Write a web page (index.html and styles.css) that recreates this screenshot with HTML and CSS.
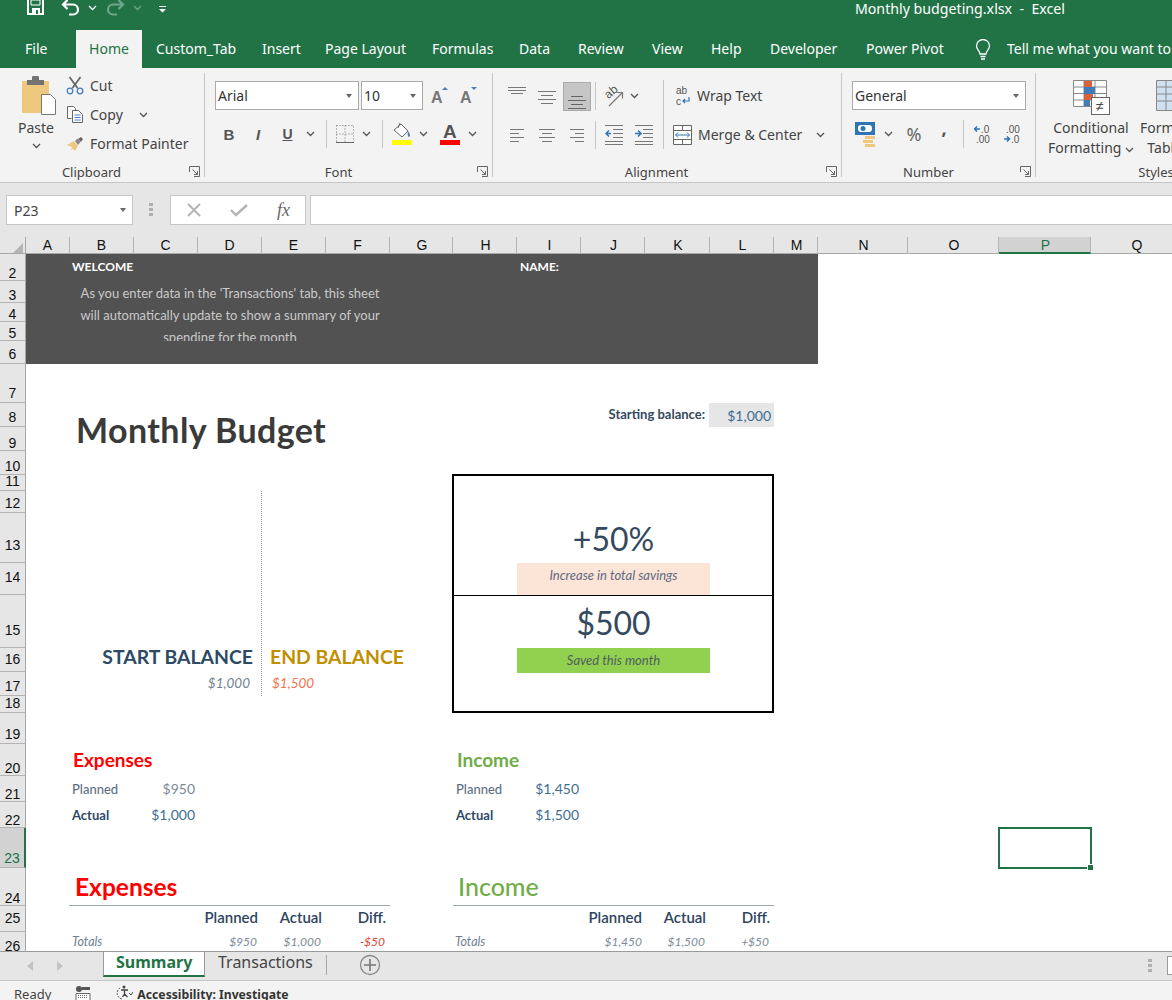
FILE: index.html
```html
<!DOCTYPE html>
<html>

<head>
    <meta charset="UTF-8">
    <meta name="viewport" content="width=device-width, initial-scale=1.0">
    <title>Monthly budgeting.xlsx - Excel</title>
    <link rel="stylesheet" href="styles.css">
</head>

<body>
    <svg class="defs" width="0" height="0">
        <symbol id="chev" viewBox="0 0 9 6"><path d="M1 1l3.5 3.5L8 1" fill="none" stroke="#555" stroke-width="1.3"/></symbol>
        <symbol id="launch" viewBox="0 0 11 11"><path d="M.5 6V.5h10v10H5M3.5 3.5l5 5M8.5 5v3.5H5" fill="none" stroke="#666"/></symbol>
    </svg>

    <div class="titlebar">
        <svg class="qat-save" width="17" height="15" viewBox="0 0 17 15"><path d="M1 0v14h15V0" fill="none" stroke="#fff" stroke-width="2"/><path d="M5 8h8v6H5z" fill="#fff"/><path d="M9 10h2v4H9z" fill="#217346"/><path d="M4 0h9v5H4z" fill="none" stroke="#fff"/></svg>
        <svg class="qat-undo" width="19" height="16" viewBox="0 0 19 16"><path d="M6.5 0L2 4.5 6.5 9M2.5 4.5H12a5 5 0 0 1 0 10H8" fill="none" stroke="#fff" stroke-width="2.2"/></svg>
        <svg class="qat-chev" width="9" height="6"><path d="M1 1l3.5 3.5L8 1" fill="none" stroke="#fff" stroke-width="1.3"/></svg>
        <svg class="qat-redo" width="19" height="16" viewBox="0 0 19 16"><path d="M12.5 0L17 4.5 12.5 9M16.5 4.5H7a5 5 0 0 0 0 10h4" fill="none" stroke="#6fa68a" stroke-width="2.2"/></svg>
        <svg class="qat-chev2" width="9" height="6"><path d="M1 1l3.5 3.5L8 1" fill="none" stroke="#6fa68a" stroke-width="1.3"/></svg>
        <svg class="qat-more" width="7" height="7"><path d="M0 .5h7" stroke="#fff"/><path d="M0 3h7L3.5 6.5z" fill="#fff"/></svg>
        <div class="doc-title">Monthly budgeting.xlsx&nbsp; -&nbsp; Excel</div>
    </div>

    <div class="tabbar">
        <div class="tab file">File</div>
        <div class="tab active">Home</div>
        <div class="tab">Custom_Tab</div>
        <div class="tab">Insert</div>
        <div class="tab">Page Layout</div>
        <div class="tab">Formulas</div>
        <div class="tab">Data</div>
        <div class="tab">Review</div>
        <div class="tab">View</div>
        <div class="tab">Help</div>
        <div class="tab">Developer</div>
        <div class="tab">Power Pivot</div>
        <svg class="bulb" width="16" height="22" viewBox="0 0 16 22"><path d="M5 15c0-3-3.5-4.5-3.5-8a6.5 6.5 0 0 1 13 0c0 3.5-3.5 5-3.5 8z" fill="none" stroke="#fff" stroke-width="1.3"/><path d="M5.5 17.5h5M6 20h4" stroke="#fff" stroke-width="1.5"/></svg>
        <div class="tell">Tell me what you want to do</div>
    </div>

    <div class="ribbon">
        <section class="group clipboard">
            <div class="group-body clip-body">
                <div class="paste">
                    <svg width="36" height="40" viewBox="0 0 36 40"><rect x="1" y="5" width="27" height="32" rx="1" fill="#edc87e"/><path d="M6 4h5V2a2 2 0 0 1 7 0v2h5v5H6z" fill="#737373"/><path d="M20.5 18.5h9l5 5v15h-14z" fill="#fff" stroke="#777"/></svg>
                    <div class="paste-label">Paste</div>
                    <svg class="chev" width="9" height="6"><use href="#chev"/></svg>
                </div>
                <div class="clip-list">
                    <div class="clip-item">
                        <svg width="18" height="19" viewBox="0 0 18 19"><path d="M3.5 1l8 11M14.5 1l-8 11" stroke="#666" stroke-width="1.8"/><circle cx="4" cy="15" r="2.8" fill="none" stroke="#4a7ebb" stroke-width="1.3"/><circle cx="14" cy="15" r="2.8" fill="none" stroke="#4a7ebb" stroke-width="1.3"/></svg>
                        <span>Cut</span>
                    </div>
                    <div class="clip-item">
                        <svg width="18" height="19" viewBox="0 0 18 19"><path d="M1.5 1.5h6l2 2v2M1.5 1.5v12h4" fill="#fff" stroke="#666"/><path d="M6.5 5.5h6l4 4v8h-10z" fill="#fff" stroke="#666"/><path d="M8.5 10h6M8.5 12.5h6M8.5 15h6" stroke="#4a7ebb"/></svg>
                        <span>Copy</span>
                        <svg class="chev copy-chev" width="9" height="6"><use href="#chev"/></svg>
                    </div>
                    <div class="clip-item">
                        <svg width="18" height="16" viewBox="0 0 18 16"><path d="M1 9l7-4 4 5-3 5-2-2-2 1 1-3z" fill="#edc87e"/><path d="M9 5l2.5-2.5 3 3.5L12 9z" fill="#888"/><path d="M12 3l3-2 2 2-2 3z" fill="#666"/></svg>
                        <span>Format Painter</span>
                    </div>
                </div>
            </div>
            <div class="group-label">Clipboard<svg class="launcher" width="11" height="11"><use href="#launch"/></svg></div>
        </section>

        <section class="group font">
            <div class="group-body">
                <div class="font-top">
                    <div class="combo w-font">Arial<i class="caret"></i></div>
                    <div class="combo w-size">10<i class="caret"></i></div>
                    <svg class="grow" width="20" height="18" viewBox="0 0 20 18"><text x="1" y="16" class="glyph-a">A</text><path d="M12 3l3-3 3 3z" fill="#4a7ebb"/></svg>
                    <svg class="shrink" width="20" height="18" viewBox="0 0 20 18"><text x="1" y="16" class="glyph-a">A</text><path d="M12 0h6l-3 3z" fill="#4a7ebb"/></svg>
                </div>
                <div class="font-tools">
                    <span class="t-b">B</span>
                    <span class="t-i">I</span>
                    <span class="t-u">U</span>
                    <svg width="9" height="6"><use href="#chev"/></svg>
                    <i class="sep"></i>
                    <svg width="18" height="18" viewBox="0 0 18 18"><path d="M.5.5h17v17M.5.5v17M9 .5v17M.5 9h17" fill="none" stroke="#777" stroke-dasharray="1 2"/><path d="M0 17.5h18" stroke="#666"/></svg>
                    <svg width="9" height="6"><use href="#chev"/></svg>
                    <i class="sep"></i>
                    <svg width="20" height="24" viewBox="0 0 20 24"><path d="M2 8l7-6 7 7-6 6z" fill="#fff" stroke="#666"/><path d="M6 6l2-5" stroke="#666"/><path d="M16 9c2 3 2.5 4 1.5 5.5S15 14 16 9z" fill="#4a7ebb"/><rect y="18" width="20" height="5" fill="#ff0"/></svg>
                    <svg width="9" height="6"><use href="#chev"/></svg>
                    <svg width="20" height="24" viewBox="0 0 20 24"><text x="3" y="16" class="glyph-a big">A</text><rect y="18" width="20" height="5" fill="#f00"/></svg>
                    <svg width="9" height="6"><use href="#chev"/></svg>
                </div>
            </div>
            <div class="group-label">Font<svg class="launcher" width="11" height="11"><use href="#launch"/></svg></div>
        </section>

        <section class="group alignment">
            <div class="group-body align-body">
                <div class="align-icons">
                    <div class="align-row top">
                        <svg width="18" height="8" viewBox="0 0 18 8"><path d="M0 .5h18M0 3.5h18M3 6.5h12" stroke="#777"/></svg>
                        <svg width="18" height="13" viewBox="0 0 18 13"><path d="M0 .5h18M3 4.5h12M0 8.5h18M3 12.5h12" stroke="#777"/></svg>
                        <div class="align-on"><svg width="18" height="13" viewBox="0 0 18 13"><path d="M3 .5h12M0 4.5h18M3 8.5h12M0 12.5h18" stroke="#666"/></svg></div>
                        <i class="sep"></i>
                        <svg width="20" height="22" viewBox="0 0 20 22"><text x="1" y="11" class="ab" transform="rotate(-40 7 8)">ab</text><path d="M5 21L18 8M12.5 7.5h6v6" fill="none" stroke="#777" stroke-width="1.2"/></svg>
                        <svg width="9" height="6"><use href="#chev"/></svg>
                    </div>
                    <div class="align-row lower">
                        <svg width="14" height="13" viewBox="0 0 14 13"><path d="M0 .5h14M0 4.5h9M0 8.5h14M0 12.5h9" stroke="#777"/></svg>
                        <svg width="16" height="13" viewBox="0 0 16 13"><path d="M0 .5h16M3 4.5h10M0 8.5h16M3 12.5h10" stroke="#777"/></svg>
                        <svg width="14" height="13" viewBox="0 0 14 13"><path d="M0 .5h14M5 4.5h9M0 8.5h14M5 12.5h9" stroke="#777"/></svg>
                        <i class="sep"></i>
                        <svg width="18" height="20" viewBox="0 0 18 20"><path d="M0 .5h18M8 4.5h10M8 8.5h10M8 12.5h10M0 16.5h18M0 19.5h18" stroke="#777"/><path d="M6 8.5H1M4 5.5l-3 3 3 3" fill="none" stroke="#2f75b5" stroke-width="1.5"/></svg>
                        <svg width="18" height="20" viewBox="0 0 18 20"><path d="M0 .5h18M8 4.5h10M8 8.5h10M8 12.5h10M0 16.5h18M0 19.5h18" stroke="#777"/><path d="M0 8.5h5M3 5.5l3 3-3 3" fill="none" stroke="#2f75b5" stroke-width="1.5"/></svg>
                    </div>
                </div>
                <div class="align-text">
                    <div class="align-cmd cmd-wrap">
                        <svg width="16" height="20" viewBox="0 0 16 20"><text x="1" y="8" class="ab-small">ab</text><text x="1" y="19" class="ab-small">c</text><path d="M14 11v4H8M10 13l-2 2 2 2" fill="none" stroke="#2f75b5" stroke-width="1.2"/></svg>
                        <span>Wrap Text</span>
                    </div>
                    <div class="align-cmd">
                        <svg width="19" height="20" viewBox="0 0 19 20"><path d="M.5.5h18v19H.5zM.5 5.5h18M.5 14.5h18M9.5.5v5M9.5 14.5v5" fill="#fff" stroke="#666"/><path d="M3 10h13M5 7.5L2.5 10 5 12.5M14 7.5l2.5 2.5-2.5 2.5" fill="none" stroke="#2f75b5"/></svg>
                        <span>Merge &amp; Center</span>
                        <svg class="merge-chev" width="9" height="6"><use href="#chev"/></svg>
                    </div>
                </div>
            </div>
            <div class="group-label">Alignment<svg class="launcher" width="11" height="11"><use href="#launch"/></svg></div>
        </section>

        <section class="group number">
            <div class="group-body">
                <div class="combo w-format">General<i class="caret"></i></div>
                <div class="number-tools">
                    <svg width="23" height="25" viewBox="0 0 23 25"><rect y="0" width="20" height="13" fill="#2f75b5"/><rect x="3" y="3" width="14" height="7" rx="3" fill="#fff"/><circle cx="8" cy="6.5" r="2.5" fill="#2f75b5"/><path d="M10 14h10v3H10zM8 18h10v3H8zM10 22h10v3H10z" fill="#edc87e"/></svg>
                    <svg width="9" height="6"><use href="#chev"/></svg>
                    <span class="t-pct">%</span>
                    <span class="t-comma">,</span>
                    <i class="sep"></i>
                    <svg width="16" height="20" viewBox="0 0 16 20"><path d="M6 5H1M3 2.5L.5 5 3 7.5" fill="none" stroke="#2f75b5" stroke-width="1.5"/><text x="7" y="9" class="dec">.0</text><text x="2" y="19" class="dec">.00</text></svg>
                    <svg width="16" height="20" viewBox="0 0 16 20"><text x="2" y="9" class="dec">.00</text><path d="M0 15h5M3 12.5L5.5 15 3 17.5" fill="none" stroke="#2f75b5" stroke-width="1.5"/><text x="7" y="19" class="dec">.0</text></svg>
                </div>
            </div>
            <div class="group-label">Number<svg class="launcher" width="11" height="11"><use href="#launch"/></svg></div>
        </section>

        <section class="group styles">
            <div class="group-body styles-body">
                <div class="style-cmd cf">
                    <svg width="38" height="35" viewBox="0 0 38 35"><path d="M1.5.5h33v26h-33zM1.5 7h33M1.5 13.5h33M1.5 20h33M12 .5v26M23 .5v26" fill="#fff" stroke="#888"/><rect x="12" y="1" width="8" height="6" fill="#d9623b"/><rect x="12" y="7" width="11" height="7" fill="#3f7cba"/><rect x="12" y="14" width="9" height="6" fill="#d9623b"/><rect x="12" y="20" width="6" height="6" fill="#3f7cba"/><rect x="19.5" y="17.5" width="18" height="17" fill="#fff" stroke="#666"/><text x="24" y="31" class="ne">≠</text></svg>
                    <div>Conditional</div>
                    <div>Formatting <svg width="9" height="6"><use href="#chev"/></svg></div>
                </div>
                <div class="style-cmd ft">
                    <svg width="36" height="35" viewBox="0 0 36 35"><path d="M16.5.5h19v30h-19zM16.5 7h19M16.5 14h19M16.5 21h19M26 .5v30" fill="#cfe0f0" stroke="#888"/></svg>
                    <div>Format as</div>
                    <div>Table <svg width="9" height="6"><use href="#chev"/></svg></div>
                </div>
            </div>
            <div class="group-label">Styles</div>
        </section>
    </div>

    <div class="formula-band">
        <div class="name-box">P23<i class="caret"></i></div>
        <div class="grip"><i></i><i></i><i></i></div>
        <div class="fx-box">
            <svg width="16" height="14" viewBox="0 0 16 14"><path d="M2 1l12 12M14 1L2 13" stroke="#b5b5b5" stroke-width="2"/></svg>
            <svg width="18" height="14" viewBox="0 0 18 14"><path d="M1 7l5 5L17 2" fill="none" stroke="#b5b5b5" stroke-width="2.4"/></svg>
            <span class="fx">fx</span>
        </div>
        <div class="formula-input"></div>
    </div>

    <div class="col-headers">
        <div class="corner"><i></i></div>
        <div>A</div><div>B</div><div>C</div><div>D</div><div>E</div><div>F</div><div>G</div>
        <div>H</div><div>I</div><div>J</div><div>K</div><div>L</div><div>M</div><div>N</div>
        <div>O</div><div class="col-on">P</div><div>Q</div>
    </div>

    <div class="sheet">
        <div class="rh">2</div>
        <div class="rh">3</div>
        <div class="rh">4</div>
        <div class="rh">5</div>
        <div class="rh pb2">6</div>
        <div class="rh pb2">7</div>
        <div class="rh pb2">8</div>
        <div class="rh">9</div>
        <div class="rh pb1">10</div>
        <div class="rh pb2">11</div>
        <div class="rh pb2">12</div>
        <div class="rh pb10">13</div>
        <div class="rh pb10">14</div>
        <div class="rh pb10">15</div>
        <div class="rh pb5">16</div>
        <div class="rh pb2">17</div>
        <div class="rh pb2">18</div>
        <div class="rh pb2">19</div>
        <div class="rh">20</div>
        <div class="rh">21</div>
        <div class="rh">22</div>
        <div class="rh pb2 row-on">23</div>
        <div class="rh">24</div>
        <div class="rh pb6">25</div>
        <div class="rh pb4">26</div>

        <div class="banner"></div>
        <div class="cell welcome">WELCOME</div>
        <div class="cell name">NAME:</div>
        <div class="intro">As you enter data in the 'Transactions' tab, this sheet<br>will automatically update to show a summary of your<br>spending for the month</div>

        <div class="cell heading">Monthly Budget</div>
        <div class="cell start-label">Starting balance:</div>
        <div class="cell start-value">$1,000</div>

        <div class="divider"></div>
        <div class="cell start-title">START BALANCE</div>
        <div class="cell end-title">END BALANCE</div>
        <div class="cell start-amount">$1,000</div>
        <div class="cell end-amount">$1,500</div>

        <div class="band peach"></div>
        <div class="band green"></div>
        <div class="cell kpi kpi-pct">+50%</div>
        <div class="cell kpi-label peach-label">Increase in total savings</div>
        <div class="cell kpi kpi-save">$500</div>
        <div class="cell kpi-label green-label">Saved this month</div>
        <div class="kpi-frame"></div>

        <div class="cell sub exp-sub">Expenses</div>
        <div class="cell line planned exp-pl">Planned</div>
        <div class="cell amt planned-amt exp-pl-v">$950</div>
        <div class="cell line actual exp-ac">Actual</div>
        <div class="cell amt actual-amt exp-ac-v">$1,000</div>

        <div class="cell sub inc-sub">Income</div>
        <div class="cell line planned inc-pl">Planned</div>
        <div class="cell amt actual-amt inc-pl-v">$1,450</div>
        <div class="cell line actual inc-ac">Actual</div>
        <div class="cell amt actual-amt inc-ac-v">$1,500</div>

        <div class="cell table-title exp-title">Expenses</div>
        <div class="cell table-title inc-title">Income</div>

        <div class="cell th exp-c1">Planned</div>
        <div class="cell th exp-c2">Actual</div>
        <div class="cell th exp-c3">Diff.</div>
        <div class="cell totals exp-t">Totals</div>
        <div class="cell tot exp-v1">$950</div>
        <div class="cell tot exp-v2">$1,000</div>
        <div class="cell tot minus exp-v3">-$50</div>

        <div class="cell th inc-c1">Planned</div>
        <div class="cell th inc-c2">Actual</div>
        <div class="cell th inc-c3">Diff.</div>
        <div class="cell totals inc-t">Totals</div>
        <div class="cell tot inc-v1">$1,450</div>
        <div class="cell tot inc-v2">$1,500</div>
        <div class="cell tot inc-v3">+$50</div>

        <div class="selected"><i></i></div>
    </div>

    <div class="sheet-tabs">
        <svg class="nav-arrows" width="36" height="12" viewBox="0 0 36 12"><path d="M6 1v10L0 6zM30 1v10l6-5z" fill="#c3c3c3"/></svg>
        <div class="sheet-tab on">Summary</div>
        <div class="sheet-tab">Transactions</div>
        <i class="tab-sep"></i>
        <svg class="add-sheet" width="22" height="22" viewBox="0 0 22 22"><circle cx="11" cy="11" r="9.5" fill="none" stroke="#8a8a8a" stroke-width="1.3"/><path d="M11 5v12M5 11h12" stroke="#777" stroke-width="1.6"/></svg>
        <div class="grip tab-grip"><i></i><i></i><i></i></div>
        <div class="scroll-stub"></div>
    </div>

    <div class="statusbar">
        <span class="ready">Ready</span>
        <svg class="macro" width="16" height="16" viewBox="0 0 16 16"><circle cx="4" cy="4" r="3" fill="#555"/><path d="M7 2h8v3H7z" fill="#555"/><path d="M1 8.5h14V16H1z" fill="#fff" stroke="#666"/><path d="M3 10.5h10M3 12.5h10" stroke="#666" stroke-dasharray="1 1"/></svg>
        <svg class="access" width="18" height="16" viewBox="0 0 18 16"><path d="M5 3a6 6 0 0 0 2 11" fill="none" stroke="#555" stroke-dasharray="2 1"/><circle cx="9" cy="2" r="1.5" fill="#444"/><path d="M6 5h7M9.5 5v4l-2 3M9.5 9l3 3" fill="none" stroke="#444" stroke-width="1.3"/><path d="M14 8l2 2 2-3" fill="none" stroke="#444"/></svg>
        <b class="access-text">Accessibility: Investigate</b>
    </div>
</body>

</html>
```

FILE: styles.css
```css
:root {
    --cols: 26px 44px 64px 64px 64px 64px 64px 63px 64px 64px 64px 65px 64px 44px 90px 91px 92px 91px;
    --green: #217346;
    --ui: "Noto Sans", "Open Sans", sans-serif;
    --sheet: Lato, "Open Sans", sans-serif;
}

* {
    box-sizing: border-box;
}

html,
body {
    margin: 0;
    height: 1000px;
    overflow: hidden;
}

body {
    font-family: var(--ui);
    font-size: 14px;
    color: #444;
    background-color: #f3f3f3;
}

.defs {
    position: absolute;
}

i {
    font-style: normal;
}

/* title bar */
.titlebar {
    height: 30px;
    background-color: var(--green);
    display: flex;
    align-items: flex-start;
    padding-left: 27px;
    color: #fff;
}

.qat-undo {
    margin-left: 17px;
}

.qat-chev {
    margin: 5px 0 0 8px;
}

.qat-redo {
    margin-left: 9px;
}

.qat-chev2 {
    margin: 5px 0 0 8px;
}

.qat-more {
    margin: 6px 0 0 17px;
}

.doc-title {
    margin-left: auto;
    padding-right: 107px;
    line-height: 18px;
    font-size: 14.2px;
}

/* tabs */
.tabbar {
    height: 38px;
    background-color: var(--green);
    display: grid;
    grid-template-columns: 76px 66px 106px 63px 107px 87px 59px 74px 59px 59px 96px 109px 46px 1fr;
    color: #fff;
    white-space: nowrap;
    overflow: hidden;
}

.tab {
    padding-left: 14px;
    line-height: 37px;
    font-size: 14px;
}

.tab.file {
    padding-left: 25px;
}

.tab.active {
    padding: 0;
    text-align: center;
    background-color: #f3f3f3;
    color: var(--green);
}

.bulb {
    margin: 9px 0 0 14px;
}

.tell {
    line-height: 37px;
}

/* ribbon */
.ribbon {
    height: 114px;
    padding: 5px 0;
    display: flex;
    overflow: hidden;
    background-color: #f3f3f3;
    white-space: nowrap;
}

.group {
    flex: none;
    height: 104px;
    display: flex;
    flex-direction: column;
    border-right: 1px solid #c6c6c6;
}

.group-body {
    flex: 1;
    min-height: 0;
}

.group-label {
    position: relative;
    height: 16px;
    line-height: 22px;
    text-align: center;
    font-size: 13px;
}

.launcher {
    position: absolute;
    right: 4px;
    top: 5px;
}

.clipboard {
    width: 205px;
}

.clipboard .group-label {
    padding-right: 21px;
}

.clip-body {
    display: flex;
}

.paste {
    width: 72px;
    padding-top: 3px;
    text-align: center;
}

.paste svg {
    display: block;
    margin: 0 auto;
}

.paste>svg:first-child {
    margin-left: 21px;
}

.paste-label {
    line-height: 20px;
    margin-top: 2px;
}

.paste .chev {
    margin-top: 5px;
}

.clip-list {
    margin-top: -2px;
    margin-left: -6px;
}

.clip-item {
    height: 29px;
    display: flex;
    align-items: center;
    gap: 6px;
}

.clip-item svg:first-child {
    width: 18px;
}

.copy-chev {
    margin-left: 10px;
}

.font {
    width: 288px;
    padding-left: 10px;
}

.font .group-label {
    padding-right: 30px;
}

.font-top {
    margin-top: 8px;
    display: flex;
    align-items: center;
}

.combo {
    position: relative;
    height: 29px;
    padding-left: 2px;
    line-height: 28px;
    background-color: #fff;
    border: 1px solid #ababab;
    color: #333;
}

.caret {
    position: absolute;
    right: 6px;
    top: 12px;
    border: 3.5px solid transparent;
    border-top: 4px solid #666;
    border-bottom: 0;
}

.w-font {
    width: 144px;
    margin-right: 2px;
}

.w-size {
    width: 62px;
}

.grow {
    margin-left: 7px;
}

.shrink {
    margin-left: 9px;
}

.glyph-a {
    font: 700 16px "Liberation Sans", sans-serif;
    fill: #777;
}

.glyph-a.big {
    font-size: 19px;
    fill: #555;
}

.font-tools {
    margin-top: 10px;
    height: 28px;
    display: grid;
    grid-template-columns: 28px 30px 29px 17px 14px 24px 18px 14px 25px 19px 34px 10px;
    align-items: center;
    justify-items: center;
}

.t-b {
    font: 700 15px "Liberation Sans", sans-serif;
    color: #555;
}

.t-i {
    font: italic 700 15px "Liberation Sans", sans-serif;
    color: #555;
}

.t-u {
    font: 700 14px "Liberation Sans", sans-serif;
    color: #555;
    text-decoration: underline;
}

.sep {
    display: block;
    width: 1px;
    height: 28px;
    background-color: #c6c6c6;
}

.alignment {
    width: 349px;
}

.alignment .group-label {
    padding-right: 21px;
}

.align-body {
    display: flex;
    padding-top: 7px;
}

.align-icons {
    width: 171px;
    height: 69px;
    border-right: 1px solid #c6c6c6;
}

.align-row {
    display: grid;
    grid-template-columns: 9px 30px 30px 30px 6px 32px 8px;
    height: 30px;
    align-items: center;
    justify-items: center;
}

.align-row.lower {
    grid-template-columns: 9px 30px 30px 30px 6px 32px 28px;
}

.align-row>:first-child {
    grid-column: 2;
}

.align-row.top {
    margin-top: 1px;
    margin-bottom: 9px;
}

.align-row.top>:first-child {
    align-self: start;
    margin-top: 6px;
}

.align-row.top>:nth-child(2) {
    margin-top: 2px;
}

.align-on {
    width: 28px;
    height: 29px;
    padding-top: 11px;
    text-align: center;
    background-color: #c6c6c6;
    border: 1px solid #ababab;
}

.align-text {
    padding-left: 9px;
}

.align-cmd {
    position: relative;
    display: flex;
    align-items: center;
    gap: 6px;
    height: 29px;
}

.cmd-wrap {
    margin: 1px 0 10px 2px;
}

.merge-chev {
    margin-left: 8px;
}

.ab {
    font: 12px "Liberation Sans", sans-serif;
    fill: #555;
}

.ab-small {
    font: 10px "Liberation Sans", sans-serif;
    fill: #555;
}

.number {
    width: 194px;
    padding-left: 10px;
}

.number .group-label {
    padding-right: 30px;
}

.w-format {
    width: 174px;
    margin-top: 8px;
}

.number-tools {
    margin-top: 10px;
    height: 28px;
    display: grid;
    grid-template-columns: 28px 16px 36px 24px 14px 24px 36px;
    align-items: center;
    justify-items: center;
}

.t-pct {
    font-size: 18px;
    color: #666;
}

.t-comma {
    font-size: 18px;
    font-weight: 700;
    color: #555;
    margin-top: -12px;
}

.dec {
    font: 10px "Liberation Sans", sans-serif;
    fill: #555;
}

.styles {
    width: 240px;
    border-right: 0;
}

.styles-body {
    display: flex;
    padding: 7px 0 0 10px;
}

.style-cmd {
    text-align: center;
    line-height: 20px;
}

.style-cmd>svg {
    display: block;
    margin: 0 auto 3px;
}

.cf {
    width: 90px;
}

.ft {
    width: 62px;
    margin-left: 4px;
}

.ft>svg {
    margin: 0 0 3px 0;
}

.ne {
    font: 14px "Liberation Sans", sans-serif;
    fill: #444;
}

/* formula bar */
.formula-band {
    height: 55px;
    display: flex;
    padding: 12px 0 12px 6px;
    background-color: #e6e6e6;
    border-top: 1px solid #c6c6c6;
}

.name-box {
    position: relative;
    width: 127px;
    height: 30px;
    padding-left: 7px;
    line-height: 29px;
    background-color: #fff;
    border: 1px solid #c6c6c6;
    font-size: 14px;
}

.grip {
    width: 6px;
    margin: 8px 15px 0 16px;
}

.grip i {
    display: block;
    width: 4px;
    height: 3px;
    margin-bottom: 2px;
    background-color: #b0b0b0;
}

.fx-box {
    width: 136px;
    height: 30px;
    display: grid;
    grid-template-columns: 45px 45px 45px;
    align-items: center;
    justify-items: center;
    background-color: #fff;
    border: 1px solid #c6c6c6;
}

.fx {
    font: italic 18px "Liberation Serif", serif;
    color: #666;
}

.formula-input {
    flex: 1;
    height: 30px;
    margin-left: 4px;
    background-color: #fff;
    border: 1px solid #c6c6c6;
    border-right: 0;
}

/* column headers */
.col-headers {
    height: 17px;
    display: grid;
    grid-template-columns: var(--cols);
    background-color: #e6e6e6;
    border-bottom: 1px solid #a8a8a8;
    font: 14px/16px "Liberation Sans", sans-serif;
    color: #111;
}

.col-headers div {
    text-align: center;
    border-right: 1px solid #b4b4b4;
}

.col-headers div:nth-child(n+8) {
    padding-left: 2px;
}

.col-headers .corner {
    position: relative;
    border-right: 1px solid #a8a8a8;
}

.corner i {
    position: absolute;
    right: 2px;
    bottom: 1px;
    border-left: 10px solid transparent;
    border-bottom: 10px solid #b4b4b4;
}

.col-headers .col-on {
    height: 17px;
    background-color: #d2d2d2;
    color: var(--green);
    border-bottom: 2px solid var(--green);
}

/* sheet */
.sheet {
    position: relative;
    height: 697px;
    display: grid;
    overflow: hidden;
    background-color: #fff;
    grid-template-columns: [hdr] 26px [a] 44px [b] 64px [c] 64px [d] 64px [e] 64px [f] 64px [g] 63px [h] 64px [i] 64px [j] 64px [k] 65px [l] 64px [m] 44px [n] 90px [o] 91px [p] 92px [q] 91px;
    grid-template-rows: 27px 22px 19px 19px 23px 39px 24px 24px 24px 16px 22px 50px 32px 53px 24px 24px 17px 31px 32px 26px 26px 40px 38px 26px 26px;
    font-family: var(--sheet);
    font-size: 13px;
}

.rh {
    grid-column: hdr;
    display: flex;
    align-items: flex-end;
    justify-content: center;
    background-color: #e6e6e6;
    border-right: 1px solid #a8a8a8;
    border-bottom: 1px solid #b4b4b4;
    font: 14px/14px "Liberation Sans", sans-serif;
    color: #111;
}

.pb1 {
    padding-bottom: 1px;
}

.pb2 {
    padding-bottom: 2px;
}

.pb4 {
    padding-bottom: 4px;
}

.pb5 {
    padding-bottom: 5px;
}

.pb6 {
    padding-bottom: 6px;
}

.pb10 {
    padding-bottom: 10px;
}

.row-on {
    background-color: #d2d2d2;
    color: var(--green);
    border-right: 2px solid var(--green);
}

.cell {
    display: flex;
    align-items: center;
    white-space: nowrap;
    min-width: 0;
}

.banner {
    grid-area: 1 / a / 6 / n;
    background-color: #525252;
}

.welcome {
    grid-area: 1 / b / 2 / e;
    align-items: flex-start;
    padding: 5px 0 0 2px;
    color: #fff;
    font-size: 12px;
    font-weight: 700;
}

.name {
    grid-area: 1 / i / 2 / k;
    align-items: flex-start;
    padding: 5px 0 0 3px;
    color: #fff;
    font-size: 12px;
    font-weight: 700;
}

.intro {
    grid-area: 2 / b / 5 / g;
    overflow: hidden;
    padding-top: 1px;
    text-align: center;
    line-height: 22px;
    color: #c9c9c9;
    font-size: 13px;
    white-space: nowrap;
}

.heading {
    grid-area: 7 / b / 9 / f;
    overflow: hidden;
    padding: 4px 0 0 6px;
    color: #3a3a3a;
    font-size: 34px;
    font-weight: 700;
    letter-spacing: .4px;
}

.start-label {
    grid-area: 7 / h / 8 / l;
    justify-content: flex-end;
    padding: 0 5px 3px 0;
    color: #34495e;
    font-weight: 700;
}

.start-value {
    grid-area: 7 / l / 8 / m;
    justify-content: flex-end;
    margin-left: -1px;
    padding-right: 3px;
    background-color: #e6e6e6;
    color: #3b6b93;
    font-size: 14px;
}

.divider {
    grid-area: 11 / e / 17 / f;
    margin-left: -1px;
    border-left: 1px dotted #8f8f8f;
}

.start-title {
    grid-area: 15 / b / 16 / e;
    justify-content: flex-end;
    padding: 0 9px 8px 0;
    color: #2c4a63;
    font-size: 19.4px;
    font-weight: 700;
}

.end-title {
    grid-area: 15 / e / 16 / h;
    padding: 0 0 8px 8px;
    color: #bf8f00;
    font-size: 19.4px;
    font-weight: 700;
}

.start-amount {
    grid-area: 16 / b / 17 / e;
    justify-content: flex-end;
    padding: 0 12px 2px 0;
    color: #6f7f90;
    font-style: italic;
    font-size: 13.5px;
}

.end-amount {
    grid-area: 16 / e / 17 / h;
    padding: 0 0 2px 10px;
    color: #f4704a;
    font-style: italic;
    font-size: 13.5px;
}

/* savings box */
.kpi-frame {
    grid-area: 10 / h / 18 / m;
    margin: -1px 0 0 -1px;
    border: 2px solid #000;
}

.band {
    grid-column: i / l;
}

.band.peach {
    grid-row: 13;
    background-color: #fce4d6;
}

.band.green {
    grid-row: 15;
    margin-bottom: -1px;
    background-color: #92d050;
}

.kpi {
    justify-content: center;
    color: #34495e;
    font-size: 32px;
}

.kpi-pct {
    grid-area: 12 / h / 13 / m;
}

.kpi-save {
    grid-area: 14 / h / 15 / m;
    padding-top: 1px;
    border-top: 1px solid #000;
}

.kpi-label {
    justify-content: center;
    font-style: italic;
    font-size: 13px;
}

.peach-label {
    grid-area: 13 / i / 14 / l;
    padding-bottom: 8px;
    color: #5d6b85;
}

.green-label {
    grid-area: 15 / i / 16 / l;
    color: #4f5f5f;
}

/* summaries */
.sub {
    padding-bottom: 2px;
    font-size: 19px;
    font-weight: 700;
}

.exp-sub {
    grid-area: 19 / b / 20 / e;
    padding-left: 3px;
    color: #f00;
}

.inc-sub {
    grid-area: 19 / h / 20 / k;
    padding-left: 4px;
    color: #70ad47;
}

.line {
    font-size: 13px;
}

.planned {
    color: #5f6f82;
    font-weight: 500;
}

.actual {
    color: #2c4a63;
    font-weight: 700;
}

.amt {
    justify-content: flex-end;
    font-size: 14px;
    padding: 0 3px 2px 0;
}

.planned-amt {
    color: #7b8a99;
}

.actual-amt {
    color: #3f6d92;
}

.exp-pl {
    grid-area: 20 / b / 21 / c;
    padding-left: 2px;
}

.exp-pl-v {
    grid-area: 20 / c / 21 / d;
}

.exp-ac {
    grid-area: 21 / b / 22 / c;
    padding-left: 2px;
}

.exp-ac-v {
    grid-area: 21 / c / 22 / d;
}

.inc-pl {
    grid-area: 20 / h / 21 / i;
    padding-left: 3px;
}

.inc-pl-v {
    grid-area: 20 / i / 21 / j;
    padding-right: 2px;
}

.inc-ac {
    grid-area: 21 / h / 22 / i;
    padding-left: 3px;
}

.inc-ac-v {
    grid-area: 21 / i / 22 / j;
    padding-right: 2px;
}

.table-title {
    border-bottom: 1px solid #9aa5b5;
    padding-bottom: 1px;
}

.exp-title {
    grid-area: 23 / b / 24 / g;
    margin-left: -1px;
    padding-left: 6px;
    color: #f00;
    font-size: 24.5px;
    font-weight: 700;
}

.inc-title {
    grid-area: 23 / h / 24 / m;
    padding-left: 5px;
    color: #70ad47;
    font-size: 25px;
    font-weight: 500;
}

.th {
    justify-content: flex-end;
    padding: 0 4px 4px 0;
    color: #2f4460;
    font-size: 15px;
    font-weight: 600;
}

.totals {
    padding: 0 0 8px 2px;
    color: #6f7f90;
    font-style: italic;
    font-size: 12.5px;
}

.tot {
    justify-content: flex-end;
    padding: 0 5px 8px 0;
    color: #7b8a99;
    font-style: italic;
    font-size: 12px;
}

.minus {
    color: #d9432f;
}

.exp-c1 { grid-area: 24 / d / 25 / e; }
.exp-c2 { grid-area: 24 / e / 25 / f; }
.exp-c3 { grid-area: 24 / f / 25 / g; }
.exp-t { grid-area: 25 / b / 26 / d; }
.exp-v1 { grid-area: 25 / d / 26 / e; }
.exp-v2 { grid-area: 25 / e / 26 / f; }
.exp-v3 { grid-area: 25 / f / 26 / g; }

.inc-c1 { grid-area: 24 / j / 25 / k; }
.inc-c2 { grid-area: 24 / k / 25 / l; }
.inc-c3 { grid-area: 24 / l / 25 / m; }
.inc-t { grid-area: 25 / h / 26 / i; }
.inc-v1 { grid-area: 25 / j / 26 / k; }
.inc-v2 { grid-area: 25 / k / 26 / l; }
.inc-v3 { grid-area: 25 / l / 26 / m; }

.inc-c1,
.inc-v1 {
    padding-right: 3px;
}

.selected {
    position: relative;
    grid-area: 22 / p / 23 / q;
    margin: -1px;
    border: 2px solid var(--green);
}

.selected i {
    position: absolute;
    right: -3px;
    bottom: -3px;
    width: 6px;
    height: 6px;
    background-color: var(--green);
    border: 1px solid #fff;
    border-width: 1px 0 0 1px;
}

/* sheet tabs */
.sheet-tabs {
    position: relative;
    height: 29px;
    display: flex;
    align-items: flex-start;
    background-color: #e6e6e6;
    border-top: 1px solid #9a9a9a;
}

.nav-arrows {
    margin: 8px 0 0 27px;
}

.sheet-tab {
    height: 25px;
    line-height: 21px;
    font-size: 16px;
    color: #444;
    padding: 0 13px;
}

.sheet-tab.on {
    width: 102px;
    height: 25px;
    margin-left: 40px;
    padding: 0 0 0 12px;
    background-color: #fff;
    border-left: 1px solid #9a9a9a;
    border-right: 1px solid #9a9a9a;
    border-bottom: 2px solid var(--green);
    color: var(--green);
    font-weight: 700;
}

.tab-sep {
    width: 1px;
    height: 20px;
    margin: 3px 0 0 0;
    background-color: #a8a8a8;
}

.add-sheet {
    margin: 2px 0 0 32px;
}

.tab-grip.grip {
    margin: 7px 13px 0 auto;
}

.scroll-stub {
    width: 5px;
    height: 19px;
    margin-top: 4px;
    background-color: #fff;
    border: 1px solid #9a9a9a;
    border-right: 0;
}

/* status bar */
.statusbar {
    height: 20px;
    display: flex;
    align-items: flex-start;
    padding-left: 14px;
    background-color: #f3f3f3;
    border-top: 1px solid #c6c6c6;
    font-size: 13px;
    white-space: nowrap;
}

.ready {
    line-height: 26px;
}

.macro {
    margin: 4px 0 0 24px;
}

.access {
    margin: 4px 0 0 24px;
}

.access-text {
    margin-left: 4px;
    line-height: 27px;
    font-size: 12.2px;
    color: #333;
}
```
